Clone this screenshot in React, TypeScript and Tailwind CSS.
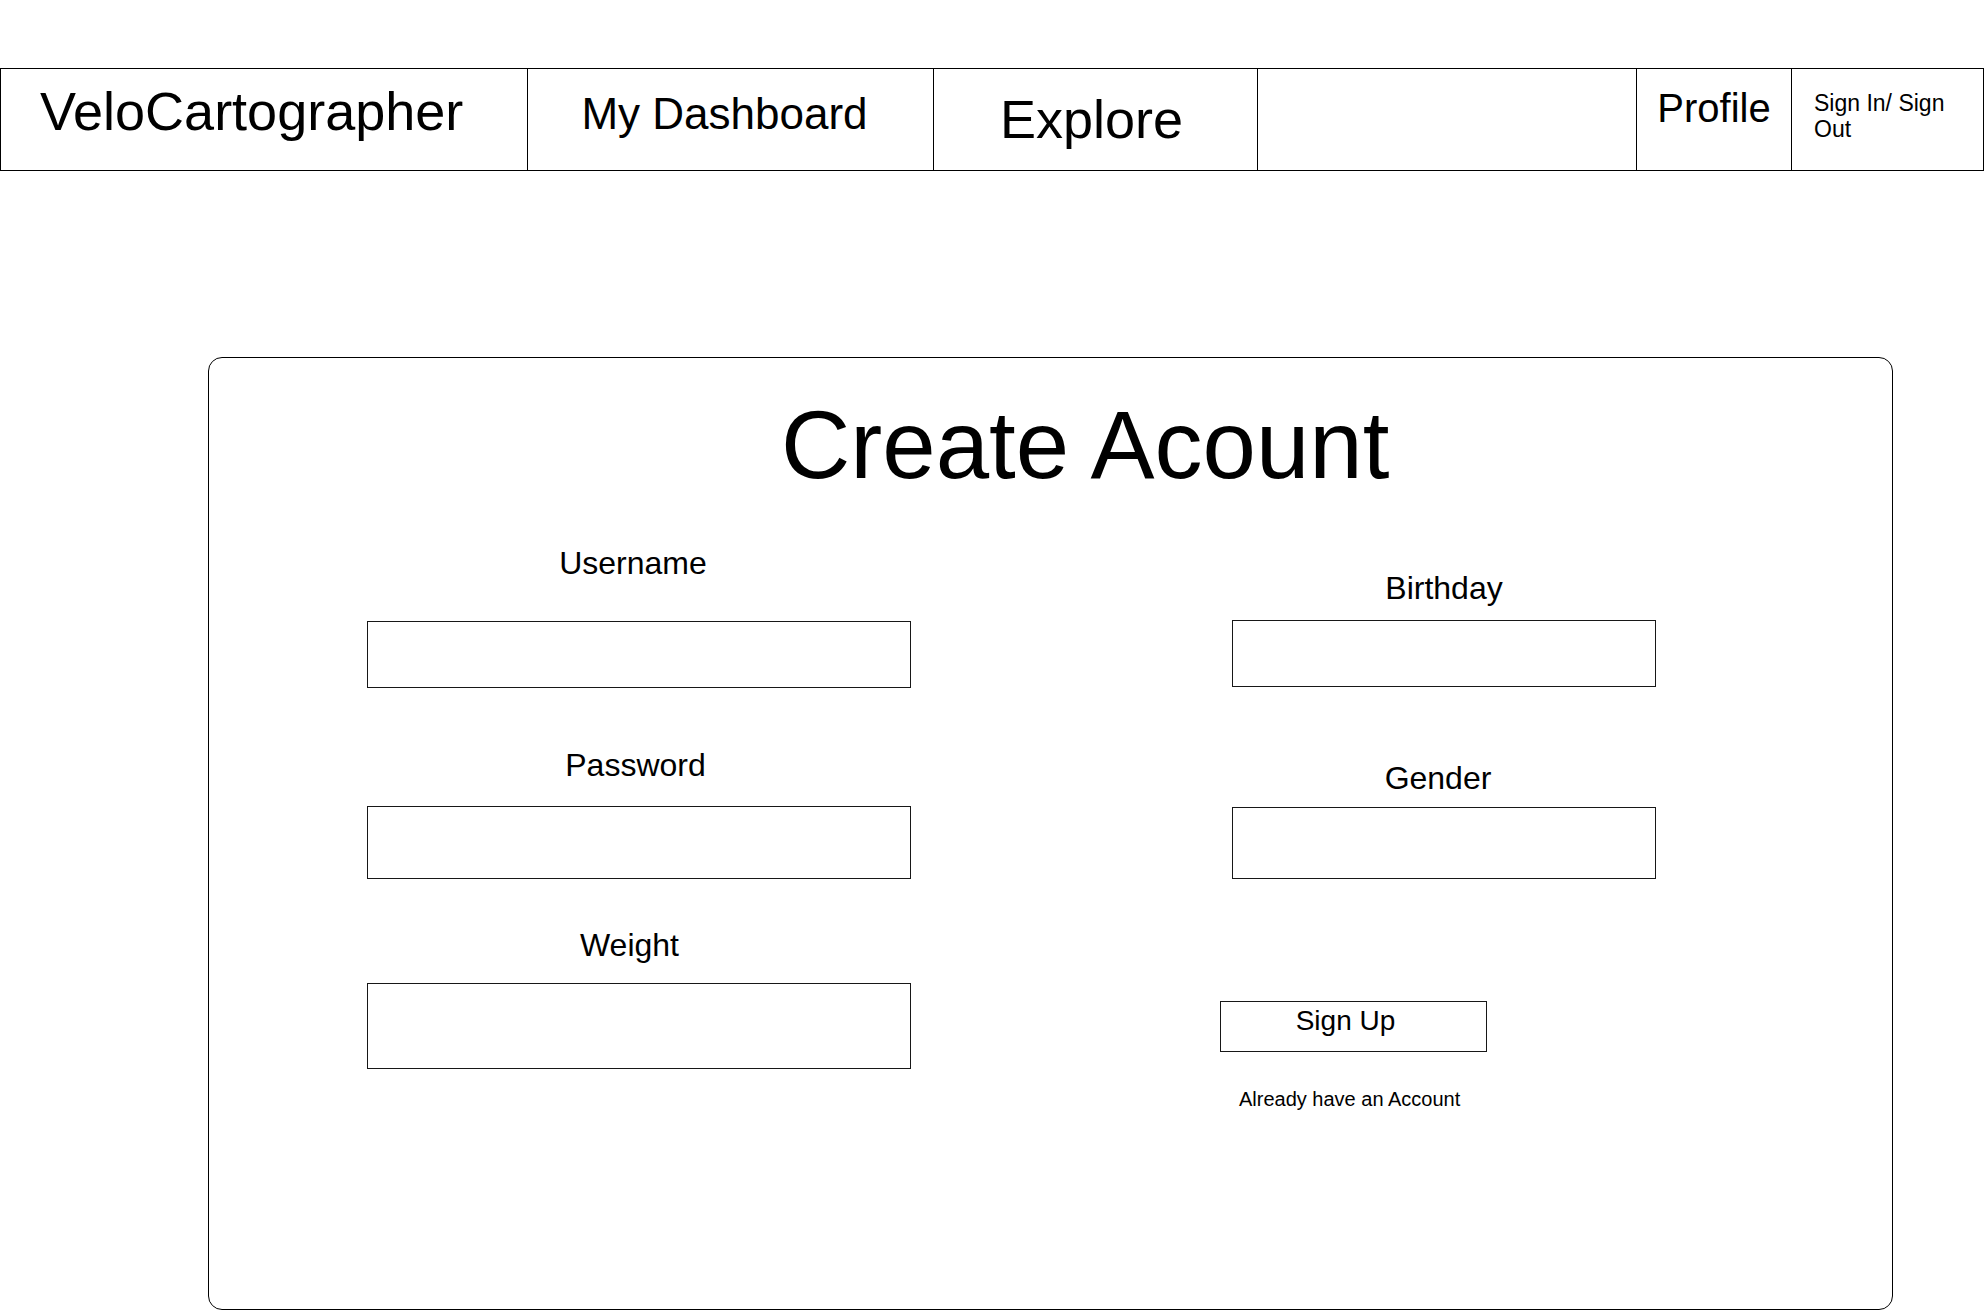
const navItems = [
  { label: "VeloCartographer", cell: "w-[527px] border-l pl-[39px] pt-[15px] text-[54px]" },
  { label: "My Dashboard", cell: "w-[406px] border-l pr-[12px] pt-[23px] text-center text-[44px]" },
  { label: "Explore", cell: "w-[324px] border-l pr-[8px] pt-[23px] text-center text-[54px]" },
  { label: "", cell: "w-[379px] border-l" },
  { label: "Profile", cell: "w-[155px] border-l pt-[19px] text-center text-[40px]" },
];

function Field({ label, height, labelGap, top, shift = "pr-[12px]" }: { label: string; height: string; labelGap: string; top: string; shift?: string }) {
  return (
    <div className={top}>
      <label className={`block text-center text-[32px] leading-none ${shift}`}>{label}</label>
      <input className={`block w-full border border-neutral-900 ${height} ${labelGap}`} />
    </div>
  );
}

export default function App() {
  return (
    <div className="h-[1310px] w-[1984px] overflow-hidden bg-white pt-[68px] text-black" style={{ fontFamily: '"Liberation Sans", Arial, sans-serif' }}>
      <nav className="flex h-[103px] border-y border-r border-black">
        {navItems.map((item, i) => (
          <div key={i} className={`border-black leading-none ${item.cell}`}>
            {item.label}
          </div>
        ))}
        <div className="w-[192px] border-l border-black pl-[22px] pr-[20px] pt-[21px] text-[23px] leading-[26px]">Sign In/ Sign Out</div>
      </nav>

      <div className="ml-[208px] mt-[186px] h-[953px] w-[1685px] rounded-[14px] border border-black">
        <h1 className="ml-[572px] mt-[39px] text-[96px] leading-none">Create Acount</h1>

        <div className="flex items-start">
          <div className="ml-[158px] w-[544px]">
            <Field label="Username" top="mt-[54px]" labelGap="mt-[42px]" height="h-[67px]" />
            <Field label="Password" top="mt-[61px]" labelGap="mt-[25px]" height="h-[73px]" shift="pr-[7px]" />
            <Field label="Weight" top="mt-[50px]" labelGap="mt-[22px]" height="h-[86px]" shift="pr-[19px]" />
          </div>

          <div className="ml-[321px] w-[424px]">
            <Field label="Birthday" top="mt-[79px]" labelGap="mt-[16px]" height="h-[67px]" shift="" />
            <Field label="Gender" top="mt-[75px]" labelGap="mt-[13px]" height="h-[72px]" shift="pr-[12px]" />
            <button className="-ml-[12px] mt-[122px] block h-[51px] w-[267px] border border-neutral-900 pr-[16px] pb-[12px] text-[28px] leading-none">
              Sign Up
            </button>
            <p className="ml-[7px] mt-[37px] text-[20px] leading-none">Already have an Account</p>
          </div>
        </div>
      </div>
    </div>
  );
}
